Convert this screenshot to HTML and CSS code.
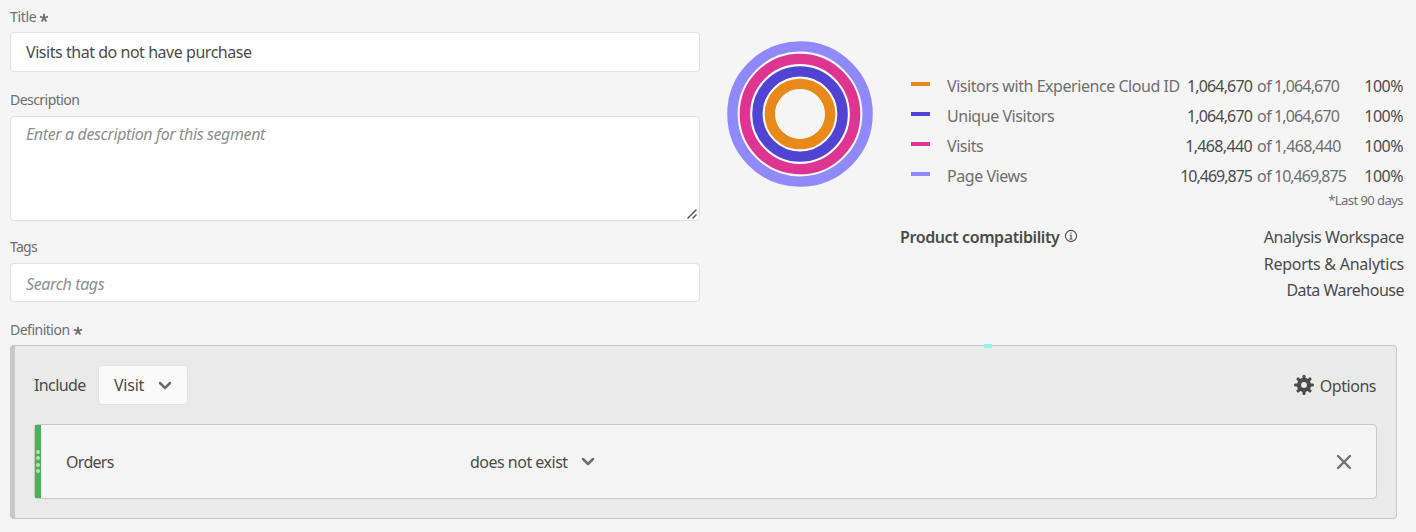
FILE: index.html
```html
<!DOCTYPE html>
<html lang="en">
<head>
<meta charset="utf-8">
<title>Segment builder</title>
<link rel="stylesheet" href="styles.css">
</head>
<body>
<main class="page">
  <div class="top">
    <form class="fields">
      <div class="label"><span class="t-title">Title</span><svg class="star" viewBox="0 0 10 10"><path d="M5 5V.8M5 5L1 3.7M5 5L9 3.7M5 5L2.6 8.6M5 5L7.4 8.6"/></svg></div>
      <div class="box box-title"><span class="t-name">Visits that do not have purchase</span></div>
      <div class="label label-desc"><span class="t-desc">Description</span></div>
      <div class="box box-desc"><span class="hint t-enter">Enter a description for this segment</span><svg class="grip" viewBox="0 0 10 10"><path d="M.5 9.5L9.5 .5M5.5 9.5L9.5 5.5"/></svg></div>
      <div class="label label-tags"><span class="t-tags">Tags</span></div>
      <div class="box box-tags"><span class="hint t-search">Search tags</span></div>
    </form>
    <svg class="rings" viewBox="0 0 146 146">
      <circle cx="73" cy="73" r="66" fill="#fafafa"/>
      <circle class="ring violet" cx="73" cy="73" r="67.6"/>
      <circle class="ring pink" cx="73" cy="73" r="55.1"/>
      <circle class="ring blue" cx="73" cy="73" r="42.6"/>
      <circle class="ring orange" cx="73" cy="73" r="30.1"/>
      <circle cx="73" cy="73" r="24.7" fill="#f5f5f5"/>
    </svg>
    <section class="summary">
      <div class="row"><i class="key k-orange"></i><span class="name">Visitors with Experience Cloud ID</span><b class="num">1,064,670</b><span class="of">of</span><span class="total">1,064,670</span><span class="pct">100%</span></div>
      <div class="row"><i class="key k-blue"></i><span class="name">Unique Visitors</span><b class="num">1,064,670</b><span class="of">of</span><span class="total">1,064,670</span><span class="pct">100%</span></div>
      <div class="row row-visits"><i class="key k-pink"></i><span class="name">Visits</span><b class="num">1,468,440</b><span class="of">of</span><span class="total">1,468,440</span><span class="pct">100%</span></div>
      <div class="row row-views"><i class="key k-violet"></i><span class="name">Page Views</span><b class="num">10,469,875</b><span class="of">of</span><span class="total">10,469,875</span><span class="pct">100%</span></div>
      <div class="note"><span class="t-note">*Last 90 days</span></div>
      <div class="compat">
        <div class="compat-title"><span class="t-compat">Product compatibility</span><svg class="info" viewBox="0 0 14 14"><circle cx="7" cy="7" r="5.6"/><path d="M7 3.4V4.8M5.7 6.2H7V10M5.5 10H8.5"/></svg></div>
        <div class="products"><span class="p1">Analysis Workspace</span><span class="p2">Reports &amp; Analytics</span><span class="p3">Data Warehouse</span></div>
      </div>
    </section>
  </div>
  <div class="label label-def"><span class="t-def">Definition</span><svg class="star" viewBox="0 0 10 10"><path d="M5 5V.8M5 5L1 3.7M5 5L9 3.7M5 5L2.6 8.6M5 5L7.4 8.6"/></svg></div>
  <section class="panel">
    <i class="marker"></i>
    <div class="panel-head">
      <span class="t-include">Include</span>
      <div class="select"><span class="t-visit">Visit</span><svg class="chev" viewBox="0 0 14 9"><path d="M2 2L7 7L12 2"/></svg></div>
      <div class="options">
        <svg class="gear" viewBox="-10 -10 20 20"><g fill="#4b4b4b"><rect id="tooth" x="-1.5" y="-9.9" width="3" height="19.8" rx="1.2"/><use href="#tooth" transform="rotate(45)"/><use href="#tooth" transform="rotate(90)"/><use href="#tooth" transform="rotate(135)"/><circle r="7.2"/></g><circle r="2.9" fill="#eaeaea"/></svg>
        <span class="t-options">Options</span>
      </div>
    </div>
    <div class="rule">
      <div class="handle"><i></i><i></i><i></i><i></i></div>
      <span class="metric">Orders</span>
      <span class="operator">does not exist</span>
      <svg class="chev" viewBox="0 0 14 9"><path d="M2 2L7 7L12 2"/></svg>
      <svg class="close" viewBox="0 0 16 16"><path d="M2 2L14 14M14 2L2 14"/></svg>
    </div>
  </section>
</main>
</body>
</html>
```
FILE: styles.css
```css
* { box-sizing: border-box; }
body { margin: 0; background: #f5f5f5; color: #4b4b4b; font: 16px/20px "Noto Sans", sans-serif; letter-spacing: -0.5px; }
span, b { white-space: nowrap; }
svg { display: block; flex: none; fill: none; }
.page { width: 1416px; height: 532px; padding-left: 10px; overflow: hidden; }
.top { display: flex; height: 302px; }
.fields { width: 690px; }
.label { height: 20px; display: flex; align-items: center; gap: 3px; font-size: 14px; letter-spacing: -0.55px; color: #6e6e6e; margin-top: 7px; }
.t-title { letter-spacing: -0.35px; }
.t-tags { letter-spacing: -0.75px; }
.t-def { letter-spacing: -0.5px; }
.star { width: 10px; height: 10px; stroke: #6e6e6e; stroke-width: 1.8; margin-top: 1px; }
.box { position: relative; background: #fff; border: 1px solid #e1e1e1; border-radius: 4px; padding: 0 15px; }
.box-title { height: 40px; line-height: 38px; margin-top: 5px; letter-spacing: -0.46px; }
.label-desc { margin-top: 18px; }
.box-desc { height: 105px; padding-top: 7px; margin-top: 6px; }
.label-tags { margin-top: 16px; }
.box-tags { height: 39px; line-height: 40px; margin-top: 6px; }
.hint { font-style: italic; color: #8e8e8e; letter-spacing: -0.38px; }
.grip { position: absolute; right: 2px; bottom: 1px; width: 10px; height: 10px; stroke: #5a5a5a; stroke-width: 1.5; }
.rings { width: 146px; height: 146px; margin: 41px 0 0 27px; }
.ring { stroke-width: 10.4; }
.violet { stroke: #9089fa; }
.pink { stroke: #de3593; }
.blue { stroke: #5144d3; }
.orange { stroke: #e8891a; }
.summary { width: 504px; margin-left: 27px; padding-top: 71px; }
.row { display: grid; grid-template-columns: 36px 206px 99px 22px 90px 39px; padding-left: 11px; height: 30px; line-height: 30px; }
.row .key { width: 19px; height: 4px; margin-top: 11px; }
.k-orange { background: #e8891a; }
.k-blue { background: #5144d3; }
.k-pink { background: #de3593; }
.k-violet { background: #9089fa; }
.name, .of, .total { color: #6e6e6e; }
.name { letter-spacing: -0.45px; }
.num, .total { letter-spacing: -0.85px; }
.num { font-weight: 400; text-align: right; }
.row-visits .num, .row-visits .total { letter-spacing: -0.65px; }
.row-views .num, .row-views .total { letter-spacing: -1px; }
.of { padding-left: 5px; }
.pct { text-align: right; }
.note { font-size: 13px; letter-spacing: -0.55px; line-height: 18px; color: #6e6e6e; text-align: right; height: 20px; padding-right: 1px; }
.compat { display: flex; justify-content: space-between; margin-top: 13px; }
.compat-title { display: flex; height: 26px; align-items: center; font-weight: 600; gap: 5px; letter-spacing: -0.4px; }
.info { width: 14px; height: 14px; stroke: #4b4b4b; stroke-width: 1.1; margin-top: -2px; }
.products { display: flex; flex-direction: column; align-items: flex-end; line-height: 26.6px; letter-spacing: -0.4px; }
.p2 { letter-spacing: -0.26px; }
.p3 { letter-spacing: -0.5px; }
.label-def { margin-top: 18px; }
.panel { position: relative; width: 1387px; height: 174px; margin-top: 5px; background: #eaeaea; border: 1px solid #c8c8c8; border-left-width: 5px; border-radius: 4px; padding: 19px 19px 0; }
.marker { position: absolute; left: 969px; top: -2px; width: 8px; height: 4px; background: #8ff5ec; }
.panel-head { display: flex; align-items: center; height: 40px; }
.t-include { width: 52px; letter-spacing: -0.6px; }
.t-visit { letter-spacing: -0.25px; }
.select { width: 90px; height: 40px; margin-left: 12px; display: flex; align-items: center; justify-content: space-between; padding: 0 15px; background: #fafafa; border: 1px solid #e1e1e1; border-radius: 4px; }
.chev { width: 14px; height: 9px; stroke: #6e6e6e; stroke-width: 2.5; stroke-linecap: round; stroke-linejoin: round; }
.options { margin-left: auto; display: flex; align-items: center; gap: 6px; line-height: 22px; letter-spacing: -0.47px; padding-right: 1px; }
.t-options { padding-top: 1px; }
.gear { width: 20px; height: 20px; }
.rule { width: 1343px; height: 75px; margin-top: 19px; display: flex; align-items: center; background: #f5f5f5; border: 1px solid #c8c8c8; border-radius: 4px; }
.handle { width: 6px; height: 73px; background: #44b556; display: flex; flex-direction: column; align-items: center; justify-content: center; gap: 2.4px; }
.handle i { width: 4px; height: 4px; border-radius: 50%; background: #b4e1bb; }
.metric { width: 404px; margin-left: 25px; letter-spacing: -0.7px; }
.operator { width: 98px; margin-right: 13px; }
.close { width: 16px; height: 16px; stroke: #6e6e6e; stroke-width: 2.4; stroke-linecap: round; margin-left: auto; margin-right: 24px; }
```
